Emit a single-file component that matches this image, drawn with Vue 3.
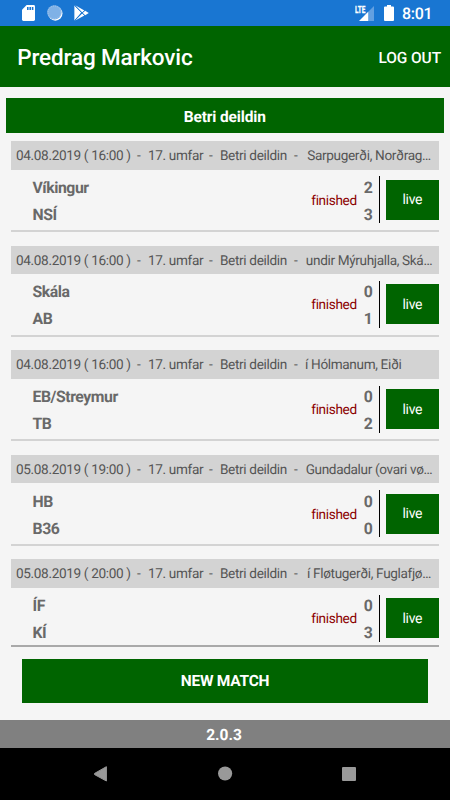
<script setup>
import { ref } from 'vue';

const userName = ref('Predrag Markovic');
const competition = ref('Betri deildin');
const version = ref('2.0.3');

// matches of the current round
const matches = ref([
  { id: 1, date: '04.08.2019 ( 16:00 )', round: '17. umfar', venue: 'Sarpugerði, Norðrag…', cut: true, home: 'Víkingur', away: 'NSÍ', homeGoals: 2, awayGoals: 3 },
  { id: 2, date: '04.08.2019 ( 16:00 )', round: '17. umfar', venue: 'undir Mýruhjalla, Ská…', cut: true, home: 'Skála', away: 'AB', homeGoals: 0, awayGoals: 1 },
  { id: 3, date: '04.08.2019 ( 16:00 )', round: '17. umfar', venue: 'í Hólmanum, Eiði', cut: false, home: 'EB/Streymur', away: 'TB', homeGoals: 0, awayGoals: 2 },
  { id: 4, date: '05.08.2019 ( 19:00 )', round: '17. umfar', venue: 'Gundadalur (ovari vø…', cut: true, home: 'HB', away: 'B36', homeGoals: 0, awayGoals: 0 },
  { id: 5, date: '05.08.2019 ( 20:00 )', round: '17. umfar', venue: 'í Fløtugerði, Fuglafjø…', cut: true, home: 'ÍF', away: 'KÍ', homeGoals: 0, awayGoals: 3 }
]);
</script>

<template>
  <div class="screen">
    <!-- status bar -->
    <div class="status-bar">
      <svg class="sd" width="13" height="16" viewBox="0 0 13 16">
        <path d="M4.6 0H11.6Q13 0 13 1.4V14.6Q13 16 11.6 16H1.4Q0 16 0 14.6V4.8Z" fill="#fff" />
        <path d="M5 2H6.6V5H5ZM7.4 2H9V5H7.4ZM9.8 2H11.4V5H9.8Z" fill="#1976d2" />
      </svg>
      <svg class="sync" width="16" height="16" viewBox="0 0 16 16">
        <circle cx="8.3" cy="8.5" r="7.2" fill="#fff" />
        <circle cx="7.4" cy="7.4" r="7.2" fill="#7fb1e6" />
        <circle cx="7.4" cy="7.4" r="6.4" fill="none" stroke="#a5c8ee" stroke-width="1" stroke-dasharray="1 1" />
      </svg>
      <svg class="play" width="15" height="16" viewBox="0 0 15 16">
        <path d="M0.4 0.4L7.2 7.6L0.4 15.4Z" fill="#fff" />
        <path d="M1.2 0.2L10.4 5.4L8.2 7.4ZM1.2 15.6L10.4 10.4L8.2 8.5ZM8.6 7.9L11.2 5.7L14.8 7.9L11.2 10.2Z" fill="#fff" />
        <path d="M1 .9L10.6 10.4M1 15L10.6 5.4" stroke="#1976d2" stroke-width=".7" />
      </svg>
      <div class="spacer"></div>
      <svg class="signal" width="20" height="17" viewBox="0 0 20 17">
        <path d="M19 1V16H13V7Z" fill="#62a0e1" />
        <path d="M13.2 6.8V16H4Z" fill="#fff" />
        <text x="0" y="8" textLength="10.4" lengthAdjust="spacingAndGlyphs">LTE</text>
      </svg>
      <svg class="battery" width="10" height="16" viewBox="0 0 10 16">
        <path d="M3 0H7V1.6H9Q10 1.6 10 2.6V15Q10 16 9 16H1Q0 16 0 15V2.6Q0 1.6 1 1.6H3Z" fill="#fff" />
      </svg>
      <span class="clock">8:01</span>
    </div>

    <header class="header">
      <h1>{{ userName }}</h1>
      <button class="logout">LOG OUT</button>
    </header>

    <main class="content">
      <h2 class="competition">{{ competition }}</h2>

      <div class="match-list">
        <section v-for="match in matches" :key="match.id" class="match">
          <div class="match-info">
            <span class="date">{{ match.date }}</span>
            <span class="dash">-</span>
            <span class="round">{{ match.round }}</span>
            <span class="dash">-</span>
            <span class="league">{{ competition }}</span>
            <span class="dash">-</span>
            <span class="venue" :class="{ cut: match.cut }">{{ match.venue }}</span>
          </div>
          <div class="match-body">
            <div class="teams">
              <p>{{ match.home }}</p>
              <p>{{ match.away }}</p>
            </div>
            <span class="state">finished</span>
            <div class="score">
              <p>{{ match.homeGoals }}</p>
              <p>{{ match.awayGoals }}</p>
            </div>
            <div class="divider"></div>
            <button class="live">live</button>
          </div>
        </section>
      </div>

      <button class="new-match">NEW MATCH</button>
    </main>

    <footer class="version">{{ version }}</footer>

    <!-- android navigation -->
    <nav class="nav-bar">
      <svg width="14" height="16" viewBox="0 0 14 16"><path d="M12.4 .7V15L.6 8.6Q0 8 .6 7.4Z" fill="#999" stroke="#999" stroke-linejoin="round" /></svg>
      <svg width="15" height="15" viewBox="0 0 15 15"><circle cx="7.1" cy="7.5" r="7.1" fill="#999" /></svg>
      <svg width="14" height="14" viewBox="0 0 14 14"><rect width="14" height="14" rx="1" fill="#999" /></svg>
    </nav>
  </div>
</template>

<style>
body {
  margin: 0;
  background: #f5f5f5;
}
</style>

<style scoped>
.screen {
  display: flex;
  flex-direction: column;
  width: 450px;
  height: 800px;
  overflow: hidden;
  background: #f5f5f5;
  font-family: Roboto, "Liberation Sans", sans-serif;
  text-rendering: geometricPrecision;
}

h1, h2, p {
  margin: 0;
}

button {
  padding: 0;
  border: none;
  color: #fff;
  font-family: inherit;
  text-rendering: inherit;
  cursor: pointer;
}

.status-bar {
  display: flex;
  align-items: center;
  box-sizing: border-box;
  height: 26.3px;
  padding: 0 18px 0 22px;
  background: #1976d2;
}

.sync {
  margin-left: 12px;
}

.play {
  margin-left: 11px;
}

.spacer {
  flex: 1;
}

.signal {
  margin-right: 9px;
}

.signal text {
  fill: #fff;
  stroke: #fff;
  stroke-width: 0.3px;
  font-size: 10px;
  font-weight: 700;
}

.battery {
  margin-right: 8px;
}

.clock {
  width: 30px;
  padding-top: 2px;
  color: #fff;
  font-size: 16px;
  font-weight: 500;
  letter-spacing: -0.3px;
  line-height: 26px;
}

.header {
  display: flex;
  align-items: center;
  justify-content: space-between;
  box-sizing: border-box;
  height: 60.7px;
  padding: 2px 9px 0 17.3px;
  background: #006400;
  color: #fff;
}

.header h1 {
  font-size: 22.5px;
  font-weight: 500;
  letter-spacing: -0.15px;
}

.logout {
  background: none;
  font-size: 15.5px;
  font-weight: 500;
  letter-spacing: -0.1px;
}

.content {
  display: flex;
  flex-direction: column;
  box-sizing: border-box;
  height: 633.5px;
  padding: 11.5px 6px 0 5.5px;
}

.competition {
  height: 35px;
  background: #006400;
  color: #fff;
  font-size: 15.5px;
  font-weight: 700;
  letter-spacing: -0.15px;
  line-height: 38px;
  text-align: center;
}

.match-list {
  height: 504px;
  margin: 7.5px 5.5px 0;
  border-bottom: 2px solid #a9a9a9;
  overflow: hidden;
}

.match {
  margin-bottom: 13.4px;
  border-bottom: 2px solid #d3d3d3;
}

.match-info {
  display: flex;
  height: 28.6px;
  padding-left: 5px;
  background: #d3d3d3;
  color: #555;
  font-size: 13.6px;
  letter-spacing: -0.35px;
  line-height: 31px;
  white-space: nowrap;
}

.date {
  width: 121px;
}

.dash {
  width: 11px;
}

.round {
  width: 61px;
}

.league {
  width: 74px;
}

.venue {
  width: 128px;
}

.venue.cut {
  text-align: center;
}

.match-body {
  display: flex;
  align-items: center;
  height: 60.6px;
}

.teams {
  flex: 1;
  padding-left: 21.5px;
}

.teams p,
.score p {
  position: relative;
  top: 1px;
  color: #696969;
  font-size: 15.8px;
  font-weight: 700;
  letter-spacing: -0.45px;
  line-height: 27px;
}

.state {
  padding-top: 2px;
  color: #8b0000;
  font-size: 13.6px;
  letter-spacing: -0.35px;
}

.score {
  width: 9px;
  margin-left: 7px;
}

.divider {
  width: 1px;
  height: 47px;
  margin-left: 5.8px;
  background: #000;
}

.live {
  width: 52.3px;
  height: 40px;
  margin-left: 6.7px;
  padding-top: 1px;
  background: #006400;
  font-size: 14px;
  letter-spacing: -0.3px;
}

.new-match {
  flex-shrink: 0;
  height: 44px;
  margin: 12px 16px 0 16.5px;
  padding-top: 1px;
  background: #006400;
  font-size: 15.5px;
  font-weight: 700;
  letter-spacing: -0.25px;
}

.version {
  height: 27.5px;
  padding-right: 2px;
  background: #808080;
  color: #fff;
  font-size: 15.5px;
  font-weight: 700;
  line-height: 30px;
  text-align: center;
}

.nav-bar {
  display: flex;
  align-items: center;
  justify-content: space-between;
  flex: 1;
  padding: 0 94px;
  background: #000;
}
</style>
